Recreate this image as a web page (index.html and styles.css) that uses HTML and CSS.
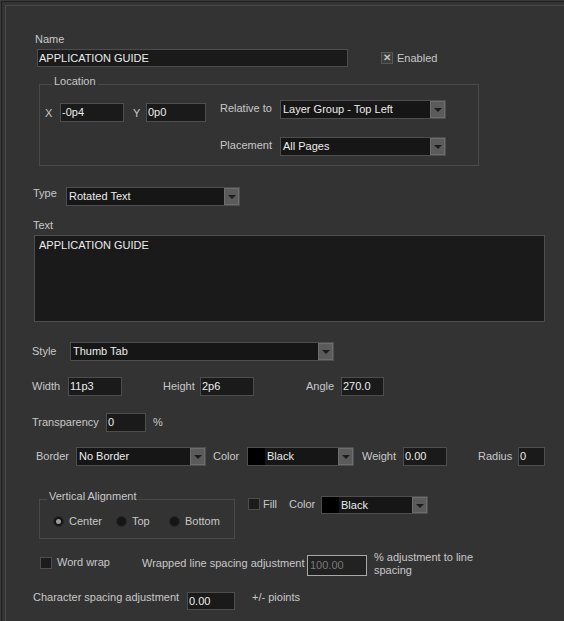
FILE: index.html
```html
<!DOCTYPE html>
<html lang="en">
<head>
    <meta charset="UTF-8">
    <title>Text Properties</title>
    <link rel="stylesheet" href="styles.css">
</head>
<body>

<div class="window">
<div class="panel">

    <div class="label name-label">Name</div>
    <div class="row name-row">
        <div class="field name-field">APPLICATION GUIDE</div>
        <div class="check enabled-check"><span class="box checked">&#x2715;</span><span class="check-text">Enabled</span></div>
    </div>

    <div class="group location">
        <span class="group-title">Location</span>
        <div class="row loc-row">
            <span class="label lbl-x">X</span>
            <div class="field input-x">-0p4</div>
            <span class="label lbl-y">Y</span>
            <div class="field input-y">0p0</div>
            <span class="label lbl-rel">Relative to</span>
            <div class="combo combo-rel"><span class="combo-text">Layer Group - Top Left</span><span class="combo-btn"></span></div>
        </div>
        <div class="row loc-row2">
            <span class="label lbl-place">Placement</span>
            <div class="combo combo-rel"><span class="combo-text">All Pages</span><span class="combo-btn"></span></div>
        </div>
    </div>

    <div class="row type-row">
        <span class="label lbl-type">Type</span>
        <div class="combo combo-type"><span class="combo-text">Rotated Text</span><span class="combo-btn"></span></div>
    </div>

    <div class="label text-label">Text</div>
    <div class="textarea">APPLICATION GUIDE</div>

    <div class="row style-row">
        <span class="label lbl-style">Style</span>
        <div class="combo combo-style"><span class="combo-text">Thumb Tab</span><span class="combo-btn"></span></div>
    </div>

    <div class="row size-row">
        <span class="label lbl-width">Width</span>
        <div class="field input-size">11p3</div>
        <span class="label lbl-height">Height</span>
        <div class="field input-size">2p6</div>
        <span class="label lbl-angle">Angle</span>
        <div class="field input-angle">270.0</div>
    </div>

    <div class="row trans-row">
        <span class="label lbl-trans">Transparency</span>
        <div class="field input-trans">0</div>
        <span class="label lbl-pct">%</span>
    </div>

    <div class="row border-row">
        <span class="label lbl-border">Border</span>
        <div class="combo combo-border"><span class="combo-text">No Border</span><span class="combo-btn"></span></div>
        <span class="label lbl-color">Color</span>
        <div class="combo combo-color"><span class="swatch"></span><span class="combo-text">Black</span><span class="combo-btn"></span></div>
        <span class="label lbl-weight">Weight</span>
        <div class="field input-weight">0.00</div>
        <span class="label lbl-radius">Radius</span>
        <div class="field input-radius">0</div>
    </div>

    <div class="row align-row">
        <div class="group valign">
            <span class="group-title">Vertical Alignment</span>
            <div class="radios">
                <div class="radio-item item-center"><span class="radio on"></span><span class="label">Center</span></div>
                <div class="radio-item item-top"><span class="radio"></span><span class="label">Top</span></div>
                <div class="radio-item"><span class="radio"></span><span class="label">Bottom</span></div>
            </div>
        </div>
        <span class="box fill-box"></span>
        <span class="label lbl-fill">Fill</span>
        <span class="label lbl-fillcolor">Color</span>
        <div class="combo combo-fill"><span class="swatch"></span><span class="combo-text">Black</span><span class="combo-btn"></span></div>
    </div>

    <div class="row wrap-row">
        <span class="box wrap-box"></span>
        <span class="label lbl-wrap">Word wrap</span>
        <span class="label lbl-wrapped">Wrapped line spacing adjustment</span>
        <div class="field input-wrapped disabled">100.00</div>
        <span class="label lbl-adjust">% adjustment to line spacing</span>
    </div>

    <div class="row char-row">
        <span class="label lbl-char">Character spacing adjustment</span>
        <div class="field input-char">0.00</div>
        <span class="label lbl-points">+/- pioints</span>
    </div>

</div>
</div>

</body>
</html>
```

FILE: styles.css
```css
body {
    margin: 0;
    background: #3a3a3a;
    font-family: "Liberation Sans", Arial, sans-serif;
    font-size: 11px;
    color: #c8c8c8;
    overflow: hidden;
}
.window {
    box-sizing: border-box;
    margin: 1px 0 0 1px;
    border-top: 1px solid #1f1f1f;
    border-left: 1px solid #1f1f1f;
    padding: 3px 0 0 3px;
    background: #333333;
    height: calc(100vh - 1px);
}
.panel {
    box-sizing: border-box;
    border-top: 1px solid #4a4a4a;
    border-left: 1px solid #4a4a4a;
    padding: 27px 0 0 26px;
    height: 100%;
}
.label {
    line-height: 13px;
    white-space: nowrap;
    color: #c8c8c8;
}
.row {
    display: flex;
    align-items: flex-start;
}

/* inputs */
.field {
    box-sizing: border-box;
    height: 19px;
    line-height: 17px;
    background: #1a1a1a;
    border: 1px solid #4e4e4e;
    color: #ececec;
    padding-left: 1px;
    white-space: nowrap;
    overflow: hidden;
}
.field.disabled {
    border-color: #a8a8a8;
    color: #7a7a7a;
    background: #222222;
}
.combo {
    box-sizing: border-box;
    display: flex;
    height: 19px;
    background: #161616;
    border: 1px solid #4e4e4e;
    color: #ececec;
}
.combo-text {
    flex: 1;
    line-height: 17px;
    padding-left: 2px;
    white-space: nowrap;
}
.combo-btn {
    box-sizing: border-box;
    width: 15px;
    background: #5b5b5b;
    border: 1px solid #6d6d6d;
    display: flex;
    align-items: center;
    justify-content: center;
}
.combo-btn::after {
    content: "";
    border-left: 4px solid transparent;
    border-right: 4px solid transparent;
    border-top: 4px solid #1c1c1c;
    margin-top: 1px;
}
.swatch {
    width: 17px;
    background: #000000;
}
.box {
    box-sizing: border-box;
    display: inline-flex;
    align-items: center;
    justify-content: center;
    width: 12px;
    height: 12px;
    background: #1c1c1c;
    border: 1px solid #4e4e4e;
    font-size: 10px;
    line-height: 10px;
}
.box.checked {
    background: #3c3c3c;
    border-color: #585858;
    color: #c0c0c0;
    font-weight: bold;
}

/* name */
.name-label {
    margin-left: 3px;
}
.name-row {
    margin-top: 3px;
    align-items: center;
}
.name-field {
    margin-left: 5px;
    width: 311px;
    height: 18px;
    line-height: 16px;
}
.check {
    display: flex;
    align-items: center;
}
.enabled-check {
    margin-left: 33px;
}
.check-text {
    margin-left: 4px;
}

/* groups */
.group {
    position: relative;
    box-sizing: border-box;
    border: 1px solid #4a4a4a;
}
.group-title {
    position: absolute;
    top: -10px;
    background: #333333;
    padding: 0 2px;
    line-height: 13px;
}
.location {
    margin: 17px 0 0 7px;
    width: 440px;
    padding: 15px 0 9px 0;
}
.location .group-title {
    left: 12px;
}
.lbl-x {
    margin: 7px 0 0 5px;
    width: 15px;
}
.input-x {
    margin-top: 3px;
    width: 64px;
}
.lbl-y {
    margin-top: 7px;
    width: 13px;
    padding-left: 9px;
}
.input-y {
    margin-top: 3px;
    width: 60px;
}
.lbl-rel {
    margin: 2px 0 0 14px;
    width: 60px;
}
.combo-rel {
    width: 166px;
}
.loc-row2 {
    margin-top: 15px;
}
.lbl-place {
    margin: 2px 0 0 180px;
    width: 60px;
}

/* type and text */
.type-row {
    margin-top: 21px;
}
.lbl-type {
    margin-left: 1px;
    width: 33px;
}
.combo-type {
    width: 174px;
}
.text-label {
    margin: 13px 0 0 1px;
}
.textarea {
    box-sizing: border-box;
    margin: 3px 0 0 2px;
    width: 511px;
    height: 87px;
    background: #1a1a1a;
    border: 1px solid #4e4e4e;
    color: #ececec;
    padding: 3px 4px;
    line-height: 13px;
}

/* style */
.style-row {
    margin-top: 20px;
    align-items: center;
}
.lbl-style {
    width: 38px;
}
.combo-style {
    width: 264px;
}

/* sizes */
.size-row {
    margin-top: 16px;
    align-items: center;
}
.lbl-width {
    width: 36px;
}
.input-size {
    width: 54px;
}
.lbl-height {
    margin-left: 41px;
    width: 37px;
}
.lbl-angle {
    margin-left: 52px;
    width: 35px;
}
.input-angle {
    width: 43px;
}
.trans-row {
    margin-top: 17px;
    align-items: center;
}
.lbl-trans {
    width: 74px;
}
.input-trans {
    width: 40px;
}
.lbl-pct {
    margin-left: 7px;
}

/* border */
.border-row {
    margin-top: 15px;
    align-items: center;
}
.lbl-border {
    margin-left: 4px;
    width: 40px;
}
.combo-border {
    width: 130px;
}
.lbl-color {
    margin-left: 7px;
    width: 34px;
}
.combo-color {
    width: 107px;
}
.lbl-weight {
    margin-left: 8px;
    width: 41px;
}
.input-weight {
    width: 44px;
}
.lbl-radius {
    margin-left: 31px;
    width: 40px;
}
.input-radius {
    width: 27px;
}

/* vertical alignment + fill */
.align-row {
    margin-top: 30px;
}
.valign {
    margin: 3px 0 0 7px;
    width: 196px;
    height: 40px;
    padding-top: 15px;
}
.valign .group-title {
    left: 7px;
}
.radios {
    display: flex;
    padding-left: 13px;
}
.radio-item {
    display: flex;
    align-items: center;
}
.item-center {
    width: 63px;
}
.item-top {
    width: 53px;
}
.radio {
    box-sizing: border-box;
    width: 11px;
    height: 11px;
    border-radius: 50%;
    background: #151515;
    border: 1px solid #2a2a2a;
    margin-right: 5px;
    display: flex;
    align-items: center;
    justify-content: center;
}
.radio.on::after {
    content: "";
    width: 5px;
    height: 5px;
    border-radius: 50%;
    background: #9a9a9a;
}
.fill-box {
    margin: 2px 0 0 13px;
}
.lbl-fill {
    margin: 2px 0 0 3px;
    width: 26px;
}
.lbl-fillcolor {
    margin-top: 2px;
    width: 32px;
}
.combo-fill {
    width: 107px;
    height: 18px;
}

/* word wrap */
.wrap-row {
    margin-top: 12px;
}
.wrap-box {
    margin: 6px 0 0 8px;
}
.lbl-wrap {
    margin: 5px 0 0 5px;
    width: 85px;
}
.lbl-wrapped {
    margin-top: 6px;
    width: 165px;
}
.input-wrapped {
    margin-top: 4px;
    width: 60px;
    height: 21px;
    line-height: 19px;
    padding-left: 2px;
}
.lbl-adjust {
    margin-left: 7px;
    width: 130px;
    white-space: normal;
}

/* character spacing */
.char-row {
    margin-top: 14px;
}
.lbl-char {
    margin-left: 1px;
    width: 154px;
}
.input-char {
    margin-top: 1px;
    width: 48px;
    height: 18px;
    line-height: 16px;
}
.lbl-points {
    margin-left: 17px;
}
```
